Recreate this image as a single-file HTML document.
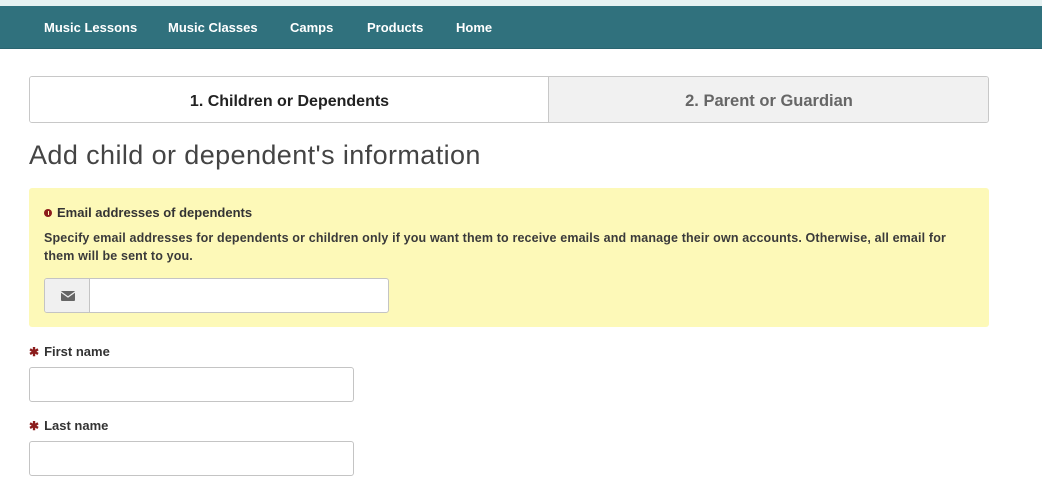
<!DOCTYPE html>
<html><head><meta charset="utf-8"><style>
*{box-sizing:border-box;margin:0;padding:0}
body{width:1042px;height:478px;overflow:hidden;background:#fff;font-family:"Liberation Sans",sans-serif;color:#333;position:relative}
.top{position:absolute;left:0;top:0;width:1042px;height:6px;background:#e6f2f2}
.nav{position:absolute;left:0;top:6px;width:1042px;height:43px;background:#30717d;border-bottom:1px solid #2a6570}
.nav span{position:absolute;top:14px;color:#fff;font-weight:bold;font-size:13px}
.tabs{position:absolute;left:29px;top:76px;width:960px;height:47px;border:1px solid #c8c8c8;border-radius:3px;overflow:hidden}
.t1{position:absolute;left:0;top:2px;width:519px;height:45px;text-align:center;line-height:45px;font-size:16px;font-weight:bold;color:#222}
.t1bg{position:absolute;left:0;top:0;width:519px;height:45px;background:#fff;border-right:1px solid #c8c8c8}
.t2bg{position:absolute;left:519px;top:0;width:440px;height:45px;background:#f1f1f1}
.t2{position:absolute;left:519px;top:2px;width:440px;height:45px;text-align:center;line-height:45px;font-size:16.5px;font-weight:bold;color:#666}
h1{position:absolute;left:29px;top:140px;font-size:27px;letter-spacing:0.4px;font-weight:normal;color:#444}
.warn{position:absolute;left:29px;top:188px;width:960px;height:139px;background:#fdf9b8;border-radius:3px}
.wt{position:absolute;left:15px;top:17px;font-size:13px;font-weight:bold;color:#333}
.wt i{display:inline-block;width:8px;height:8px;border-radius:50%;background:#8b1c1c;margin-right:5px;vertical-align:0px;position:relative}
.wt i:after{content:"";position:absolute;left:3.5px;top:2px;width:1px;height:4px;background:#fdf9b8}
.wp{position:absolute;left:15px;top:41px;width:935px;font-size:12.5px;letter-spacing:0.15px;font-weight:bold;color:#3a3a3a;line-height:18px}
.ig{position:absolute;left:15px;top:90px;width:345px;height:35px;border:1px solid #c4c4c4;border-radius:3px;background:#fff;overflow:hidden}
.ig .ad{position:absolute;left:0;top:0;width:45px;height:33px;background:#f0f0f0;border-right:1px solid #c4c4c4}
.lab{position:absolute;left:29px;font-size:13px;font-weight:bold;color:#333}
.lab b{color:#8b1c1c;margin-right:5px;font-size:12px}
.inp{position:absolute;left:29px;width:325px;height:35px;border:1px solid #c4c4c4;border-radius:3px;background:#fff}
</style></head><body>
<div class="top"></div>
<div class="nav">
<span style="left:44px">Music Lessons</span>
<span style="left:168px">Music Classes</span>
<span style="left:290px">Camps</span>
<span style="left:367px">Products</span>
<span style="left:456px">Home</span>
</div>
<div class="tabs"><div class="t1bg"></div><div class="t2bg"></div><div class="t1">1. Children or Dependents</div><div class="t2">2. Parent or Guardian</div></div>
<h1>Add child or dependent's information</h1>
<div class="warn">
<div class="wt"><i></i>Email addresses of dependents</div>
<div class="wp">Specify email addresses for dependents or children only if you want them to receive emails and manage their own accounts. Otherwise, all email for them will be sent to you.</div>
<div class="ig"><div class="ad"><svg width="14" height="10" viewBox="0 0 14 10" style="position:absolute;left:16px;top:12px"><rect x="0" y="0" width="14" height="10" rx="1" fill="#666"/><path d="M0 1 L7 6 L14 1" stroke="#f0f0f0" stroke-width="1.3" fill="none"/></svg></div></div>
</div>
<div class="lab" style="top:344px"><b>✱</b>First name</div>
<div class="inp" style="top:367px"></div>
<div class="lab" style="top:418px"><b>✱</b>Last name</div>
<div class="inp" style="top:441px"></div>
</body></html>
